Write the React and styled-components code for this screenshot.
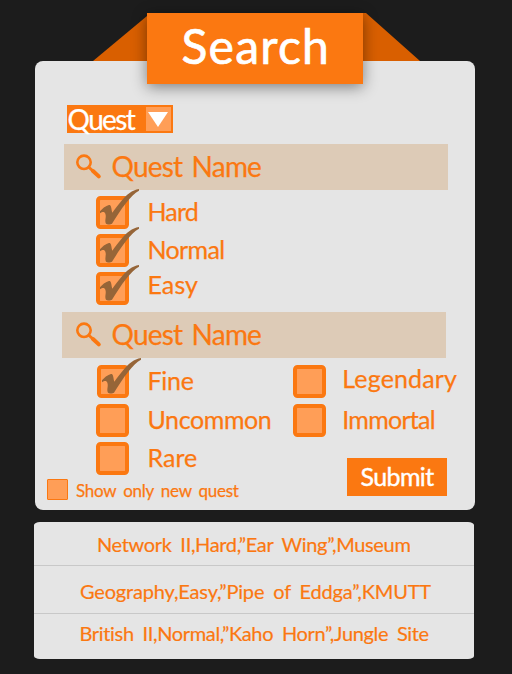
import React from "react";
import styled, { createGlobalStyle } from "styled-components";

const ORANGE = "#fb7811";
const PEACH = "#ff9e57";
const PAPER = "#e5e5e5";

const GlobalStyle = createGlobalStyle`
  * { box-sizing: border-box; }
  body { margin: 0; background: #1c1c1c; font-family: "Lato", sans-serif; font-variant-ligatures: none; color: ${ORANGE}; }
`;

const Page = styled.main`
  width: 512px;
  height: 674px;
  padding: 13px 0 0 34px;
  overflow: hidden;
  background: #1c1c1c;
`;

const Header = styled.header`
  display: flex;
  align-items: flex-start;
  height: 48px;
  padding-left: 59px;
`;

const Tail = styled.svg`
  display: block;
  flex: none;
  width: ${(p) => p.$width}px;
  height: 48px;
`;

const Banner = styled.h1`
  position: relative;
  z-index: 1;
  flex: none;
  width: 216px;
  height: 71px;
  margin: 0;
  padding-left: 34.5px;
  background: ${ORANGE};
  box-shadow: 0 3px 14px rgba(0, 0, 0, 0.45);
  color: #fff;
  font-size: 48px;
  font-weight: 400;
  line-height: 65px;
  letter-spacing: 1.2px;
  white-space: nowrap;
  -webkit-text-stroke: 0.7px #fff;
`;

const Card = styled.section`
  width: 440px;
  height: 449px;
  margin-left: 0.6px;
  padding-top: 44px;
  border-radius: 8px;
  background: ${PAPER};
`;

const Label = styled.span`
  flex: none;
  margin-top: ${(p) => p.$shift || 0}px;
  font-size: ${(p) => p.$size || 25}px;
  line-height: 33px;
  letter-spacing: ${(p) => p.$track || 0}px;
  word-spacing: 3px;
  white-space: nowrap;
  -webkit-text-stroke: 0.25px currentColor;
`;

const Select = styled.button`
  display: flex;
  align-items: flex-start;
  justify-content: space-between;
  width: 106px;
  height: 28px;
  margin: 0 0 11px 32px;
  padding: 2px 2px 0 1px;
  border: 0;
  background: ${ORANGE};
  color: #fff;
  font-family: inherit;
`;

const Arrow = styled.svg`
  width: 25px;
  height: 24px;
  background: ${PEACH};
`;

const Field = styled.div`
  display: flex;
  align-items: flex-start;
  width: 384px;
  height: 46px;
  margin-left: ${(p) => p.$left}px;
  padding-left: ${(p) => p.$pad}px;
  background: #ddcbb7;
`;

const Lens = styled.svg`
  flex: none;
  width: 26px;
  height: 26px;
  margin: 10px 9.5px 0 0;
`;

const Group = styled.div`
  display: flex;
  flex-direction: column;
  width: ${(p) => p.$width || 200}px;
  padding: ${(p) => p.$pad};
`;

const CheckRow = styled.label`
  display: flex;
  align-items: flex-start;
  gap: ${(p) => p.$gap || 18.5}px;
  height: ${(p) => p.$height || 38}px;
`;

const Box = styled.span`
  position: relative;
  flex: none;
  width: ${(p) => 33 - (p.$inset || 0)}px;
  height: 33px;
  margin-left: ${(p) => p.$inset || 0}px;
  border: 4px solid ${ORANGE};
  border-radius: 4.5px;
  background: ${PEACH};
`;

const TickMark = styled.svg`
  position: absolute;
  left: ${(p) => p.$left}px;
  top: -11px;
  width: 44px;
  height: 36px;
  overflow: visible;
`;

const Columns = styled.div`
  display: flex;
  height: 150px;
`;

const NewOnly = styled.label`
  display: flex;
  align-items: flex-start;
  gap: 8px;
  margin: 4px 0 0 -49px;
`;

const SmallBox = styled.span`
  flex: none;
  width: 21px;
  height: 21px;
  border: 1px solid ${ORANGE};
  border-radius: 1px;
  background: ${PEACH};
`;

const Submit = styled.button`
  width: 100px;
  height: 38px;
  margin: 15.5px 0 0 54px;
  padding: 0 0 0 14px;
  border: 0;
  background: ${ORANGE};
  color: #fff;
  font: 400 25px/37px "Lato", sans-serif;
  letter-spacing: -0.65px;
  text-align: left;
  -webkit-text-stroke: 0.4px #fff;
`;

const Results = styled.ul`
  width: 440px;
  margin: 12px 0 0;
  padding: 0;
  border-radius: 6px / 3px;
  overflow: hidden;
  background: ${PAPER};
  list-style: none;
`;

const Result = styled.li`
  height: ${(p) => p.$height}px;
  padding: ${(p) => p.$top}px 0 0 ${(p) => p.$left}px;
  border-bottom: ${(p) => (p.$last ? "0" : "1px solid #c8c8c8")};
  font-size: 20px;
  line-height: 24px;
  letter-spacing: ${(p) => p.$track}px;
  word-spacing: 4px;
  white-space: nowrap;
  -webkit-text-stroke: 0.2px currentColor;
`;

function Tick({ left }) {
  return (
    <TickMark viewBox="0 0 132 108" $left={left}>
      <path
        fill="#966538"
        d="M129 0 C108 4 92 16 78 34 C66 48 56 61 49 71 C46 64 47 53 42 48 C34 48 22 55 12 67 L12 73 C20 67 26 68 28 74 C32 84 25 94 30 104 C33 107 44 107 48 104 C60 86 74 62 92 40 C104 25 116 12 129 5 Z"
      />
    </TickMark>
  );
}

function Check({ text, checked, track, shift, gap, height, inset = 0 }) {
  return (
    <CheckRow $gap={gap} $height={height}>
      <Box $inset={inset}>{checked && <Tick left={inset - 4} />}</Box>
      <Label $track={track} $shift={shift}>{text}</Label>
    </CheckRow>
  );
}

function SearchField({ left, pad }) {
  return (
    <Field $left={left} $pad={pad}>
      <Lens viewBox="0 0 26 26" fill="none" stroke={ORANGE}>
        <circle cx="8" cy="8.3" r="6.7" strokeWidth="2.6" />
        <path d="M12.6 13 L18 18" strokeWidth="3" />
        <path d="M17 17 L22.8 22.4" strokeWidth="4" strokeLinecap="round" />
      </Lens>
      <Label $size={28} $track={-0.8} $shift={5.5}>Quest Name</Label>
    </Field>
  );
}

export default function App() {
  return (
    <>
      <GlobalStyle />
      <Page>
        <Header>
          <Tail $width={54} viewBox="0 0 54 48">
            <path d="M54 3 V48 H0 Z" fill="#d95f00" />
          </Tail>
          <Banner>Search</Banner>
          <Tail $width={58} viewBox="0 0 58 48">
            <path d="M0 0 H3 L57 48 H0 Z" fill="#d95f00" />
          </Tail>
        </Header>
        <Card>
          <Select>
            <Label $size={28} $track={-1.65} $shift={-4.5}>Quest</Label>
            <Arrow viewBox="0 0 25 24">
              <path d="M2 5 H22 L12 20 Z" fill="#fff" />
            </Arrow>
          </Select>
          <SearchField left={29.4} pad={12} />
          <Group $pad="6px 0 2px 61.4px">
            <Check text="Hard" checked track={-0.85} shift={-1} />
            <Check text="Normal" checked track={-0.65} shift={-1} />
            <Check text="Easy" checked track={0.1} shift={-4} />
          </Group>
          <SearchField left={27.4} pad={14} />
          <Columns>
            <Group $width={258} $pad="7px 0 0 61.4px">
              <Check text="Fine" checked track={-0.25} shift={-1} height={38.5} inset={1} />
              <Check text="Uncommon" track={-0.4} shift={-1} height={38.5} />
              <Check text="Rare" track={0.05} shift={-1} height={33} />
              <NewOnly>
                <SmallBox />
                <Label $size={17} $track={-0.25} $shift={-5.5}>Show only new quest</Label>
              </NewOnly>
            </Group>
            <Group $width={182} $pad="7px 0 0 0">
              <Check text="Legendary" track={0.15} shift={-3.5} gap={16.7} height={38.5} />
              <Check text="Immortal" track={-0.73} shift={-1} gap={16.7} height={38.5} />
              <Submit>Submit</Submit>
            </Group>
          </Columns>
        </Card>
        <Results>
          <Result $height={44} $top={10} $left={63} $track={-0.34}>Network II,Hard,”Ear Wing”,Museum</Result>
          <Result $height={48} $top={13} $left={46} $track={-0.17}>Geography,Easy,”Pipe of Eddga”,KMUTT</Result>
          <Result $height={45} $top={7} $left={45.5} $track={-0.34} $last>British II,Normal,”Kaho Horn”,Jungle Site</Result>
        </Results>
      </Page>
    </>
  );
}
